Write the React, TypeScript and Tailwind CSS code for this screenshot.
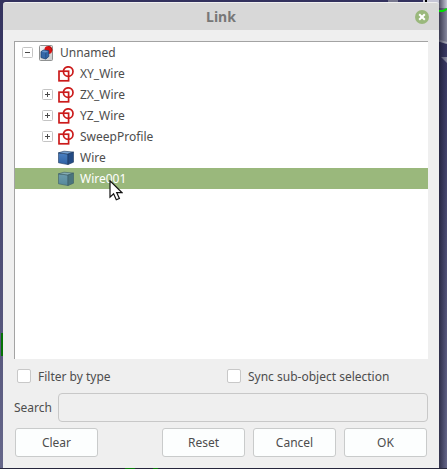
import { useState } from 'react';
import { clsx } from 'clsx';

type IconKind = 'document' | 'sketch' | 'solid';

interface TreeItem {
  label: string;
  icon: IconKind;
  expander?: 'plus' | 'minus';
  root?: boolean;
}

const items: TreeItem[] = [
  { label: 'Unnamed', icon: 'document', expander: 'minus', root: true },
  { label: 'XY_Wire', icon: 'sketch' },
  { label: 'ZX_Wire', icon: 'sketch', expander: 'plus' },
  { label: 'YZ_Wire', icon: 'sketch', expander: 'plus' },
  { label: 'SweepProfile', icon: 'sketch', expander: 'plus' },
  { label: 'Wire', icon: 'solid' },
  { label: 'Wire001', icon: 'solid' },
];

const DocumentIcon = () => (
  <svg width="16" height="16" viewBox="0 0 16 16">
    <defs>
      <linearGradient id="page" x1="0" y1="0" x2="1" y2="1">
        <stop offset="0" stopColor="#fafafa" />
        <stop offset="1" stopColor="#c8cacc" />
      </linearGradient>
    </defs>
    <rect x="1.5" y="0.5" width="13" height="15" rx="1" fill="url(#page)" stroke="#8f9191" />
    <circle cx="10.3" cy="5" r="3.9" fill="#d81313" />
    <path d="M10.4 1.5a3.6 3.6 0 0 1 3.5 4.3" fill="none" stroke="#a00a0a" strokeWidth="0.8" />
    <path d="M3 6.6 5.8 5 10.8 5.8v5.7L7.8 14 3 12.6z" fill="#3468a9" stroke="#1b3f6e" strokeWidth="0.8" />
    <path d="M3.5 6.8 6 5.4 10.3 6 7.7 7.6z" fill="#6695cc" />
    <path d="M7.8 7.8v5.8" stroke="#1f4a80" strokeWidth="0.8" />
  </svg>
);

const SketchIcon = () => (
  <svg width="16" height="16" viewBox="0 0 16 16" fill="none" stroke="#cb1b1b" strokeWidth="1.7">
    <rect x="1" y="5.2" width="9.6" height="9.6" />
    <circle cx="10.2" cy="5.6" r="4.8" />
  </svg>
);

const SolidIcon = ({ selected }: { selected: boolean }) => (
  <svg width="16" height="16" viewBox="0 0 16 16" stroke={selected ? '#3c5c66' : '#1c375c'} strokeWidth="0.6" strokeLinejoin="round">
    <defs>
      <linearGradient id={selected ? 'face-selected' : 'face'} x1="0" y1="0" x2="0" y2="1">
        <stop offset="0" stopColor={selected ? '#6d9cad' : '#4a80c2'} />
        <stop offset="1" stopColor={selected ? '#56899b' : '#2f62a4'} />
      </linearGradient>
    </defs>
    <path d="M0.5 2.8 10 4v10.6L0.5 12.8z" fill={selected ? 'url(#face-selected)' : 'url(#face)'} />
    <path d="M0.5 2.8 6 1.2l9.5 0.9L10 4z" fill={selected ? '#86adb5' : '#77a3d3'} />
    <path d="m10 4 5.5-1.9v10.1L10 14.6z" fill={selected ? '#4a747e' : '#234b85'} />
  </svg>
);

const ItemIcon = ({ kind, selected }: { kind: IconKind; selected: boolean }) => {
  if (kind === 'document') return <DocumentIcon />;
  if (kind === 'sketch') return <SketchIcon />;
  return <SolidIcon selected={selected} />;
};

const Expander = ({ type }: { type?: 'plus' | 'minus' }) => {
  if (!type) return <span className="w-[11px]" />;
  return (
    <svg width="11" height="11" viewBox="0 0 11 11">
      <rect x="0.5" y="0.5" width="10" height="10" rx="1" fill="#fff" stroke="#c4c4c4" />
      <path
        d={type === 'plus' ? 'M3 5.5h5M5.5 3v5' : 'M3 5.5h5'}
        stroke="#4a4a4a"
        shapeRendering="crispEdges"
      />
    </svg>
  );
};

const Pointer = () => (
  <svg className="pointer-events-none absolute top-3 left-[29px]" width="14" height="21" viewBox="0 0 14 21">
    <path d="M1 0.8v16.4l3.6-3.4 2.7 6 3.1-1.3-2.7-5.9h5.2z" fill="#fff" stroke="#111" strokeWidth="1.2" />
  </svg>
);

// 3D viewport that shows around the edges of the dialog
const Viewport = () => (
  <svg className="absolute inset-0 h-full w-full" aria-hidden="true">
    <defs>
      <linearGradient id="sky" x1="0" y1="0" x2="0" y2="1">
        <stop offset="0" stopColor="#33325e" />
        <stop offset="1" stopColor="#66678a" />
      </linearGradient>
      <linearGradient id="shade" x1="0" y1="0" x2="1" y2="0">
        <stop offset="0" stopColor="#15152a" stopOpacity="0.65" />
        <stop offset="1" stopColor="#15152a" stopOpacity="0" />
      </linearGradient>
    </defs>
    <rect width="100%" height="100%" fill="url(#sky)" />
    <path d="M388 0h10v2h-10z" fill="#77788e" />
    <path d="M423 0h24v8h-24z" fill="#c6c6d6" />
    <path d="M436 8h11v35l-11-2z" fill="#85869c" />
    <path d="M426 0v3" stroke="#000" strokeWidth="2" />
    <path d="m437 40 10 3" stroke="#b2b3c0" strokeWidth="2" />
    <path d="M441 57h6v6z" fill="#8d8ea4" />
    <path d="M2 333v23" stroke="#067306" strokeWidth="2" />
    <rect x="439" width="8" height="100%" fill="url(#shade)" />
    <path d="M438 11h5l4-2" fill="none" stroke="#00e000" strokeWidth="2" />
    <rect y="468" width="100%" height="1" fill="#25253b" />
    <path d="M125 468.5h10m18 0h5" stroke="#087808" />
  </svg>
);

const CheckOption = ({ label }: { label: string }) => (
  <label className="flex flex-1 items-center gap-[7px] whitespace-nowrap">
    <input
      type="checkbox"
      className="size-[14px] appearance-none rounded-[2px] border border-[#c8c8c8] bg-white checked:bg-[#9ab87c]"
    />
    {label}
  </label>
);

const buttonStyle = 'h-[29px] w-[83px] rounded-[3px] border border-[#c9cbcb] bg-[#fcfefe]';

const App = () => {
  const [selected, setSelected] = useState('Wire001');
  const [search, setSearch] = useState('');

  return (
    <main className="relative h-screen font-['Noto_Sans',sans-serif] text-[12px] leading-[21px] text-[#4d4d4d]">
      <Viewport />
      <section
        aria-label="Link"
        className="relative mr-2 ml-[3px] flex h-full flex-col pt-0.5 pb-px"
      >
        <header className="relative flex h-7 shrink-0 items-center justify-center rounded-t-[3px] border-t border-[#f0f0f0] bg-[#d8d8d8]">
          <h1 className="text-[14px] font-bold text-[#777]">Link</h1>
          <button
            type="button"
            aria-label="Close"
            className="absolute right-[10px] flex size-[14px] items-center justify-center rounded-full bg-[#9ab87c]"
          >
            <svg width="8" height="8" viewBox="0 0 8 8" stroke="#fff" strokeWidth="2">
              <path d="m1.2 1.2 5.6 5.6m0-5.6L1.2 6.8" />
            </svg>
          </button>
        </header>

        <div className="flex min-h-0 flex-1 flex-col bg-[#efefef] p-[11px]">
          <ul role="tree" className="flex-1 border-t border-l border-[#a3a3a3] bg-white">
            {items.map((item) => {
              const isSelected = item.label === selected;
              return (
                <li
                  key={item.label}
                  role="treeitem"
                  aria-selected={isSelected}
                  onClick={() => setSelected(item.label)}
                  className={clsx(
                    'flex h-[21px] items-center gap-[5px]',
                    item.root ? 'pl-[7px]' : 'pl-[27px]',
                    isSelected && 'bg-[#9ab87c] text-white'
                  )}
                >
                  <Expander type={item.expander} />
                  <span className="flex items-center gap-[6px]">
                    <ItemIcon kind={item.icon} selected={isSelected} />
                    <span className="relative">
                      {item.label}
                      {isSelected && <Pointer />}
                    </span>
                  </span>
                </li>
              );
            })}
          </ul>

          <div className="flex h-[34px] items-center gap-[9px] pl-[3px]">
            <CheckOption label="Filter by type" />
            <CheckOption label="Sync sub-object selection" />
          </div>

          <div className="flex items-center gap-[6px]">
            <label htmlFor="search">Search</label>
            <input
              id="search"
              type="text"
              value={search}
              onChange={(e) => setSearch(e.target.value)}
              className="h-[29px] min-w-0 flex-1 rounded-[4px] border border-[#c8c8c8] bg-[#efefef] px-2 outline-none"
            />
          </div>

          <div className="mt-[6px] flex gap-2 px-px">
            <button type="button" className={clsx(buttonStyle, 'mr-auto')} onClick={() => setSearch('')}>
              Clear
            </button>
            <button type="button" className={buttonStyle}>Reset</button>
            <button type="button" className={buttonStyle}>Cancel</button>
            <button type="button" className={buttonStyle}>OK</button>
          </div>
        </div>
      </section>
    </main>
  );
};

export default App;
